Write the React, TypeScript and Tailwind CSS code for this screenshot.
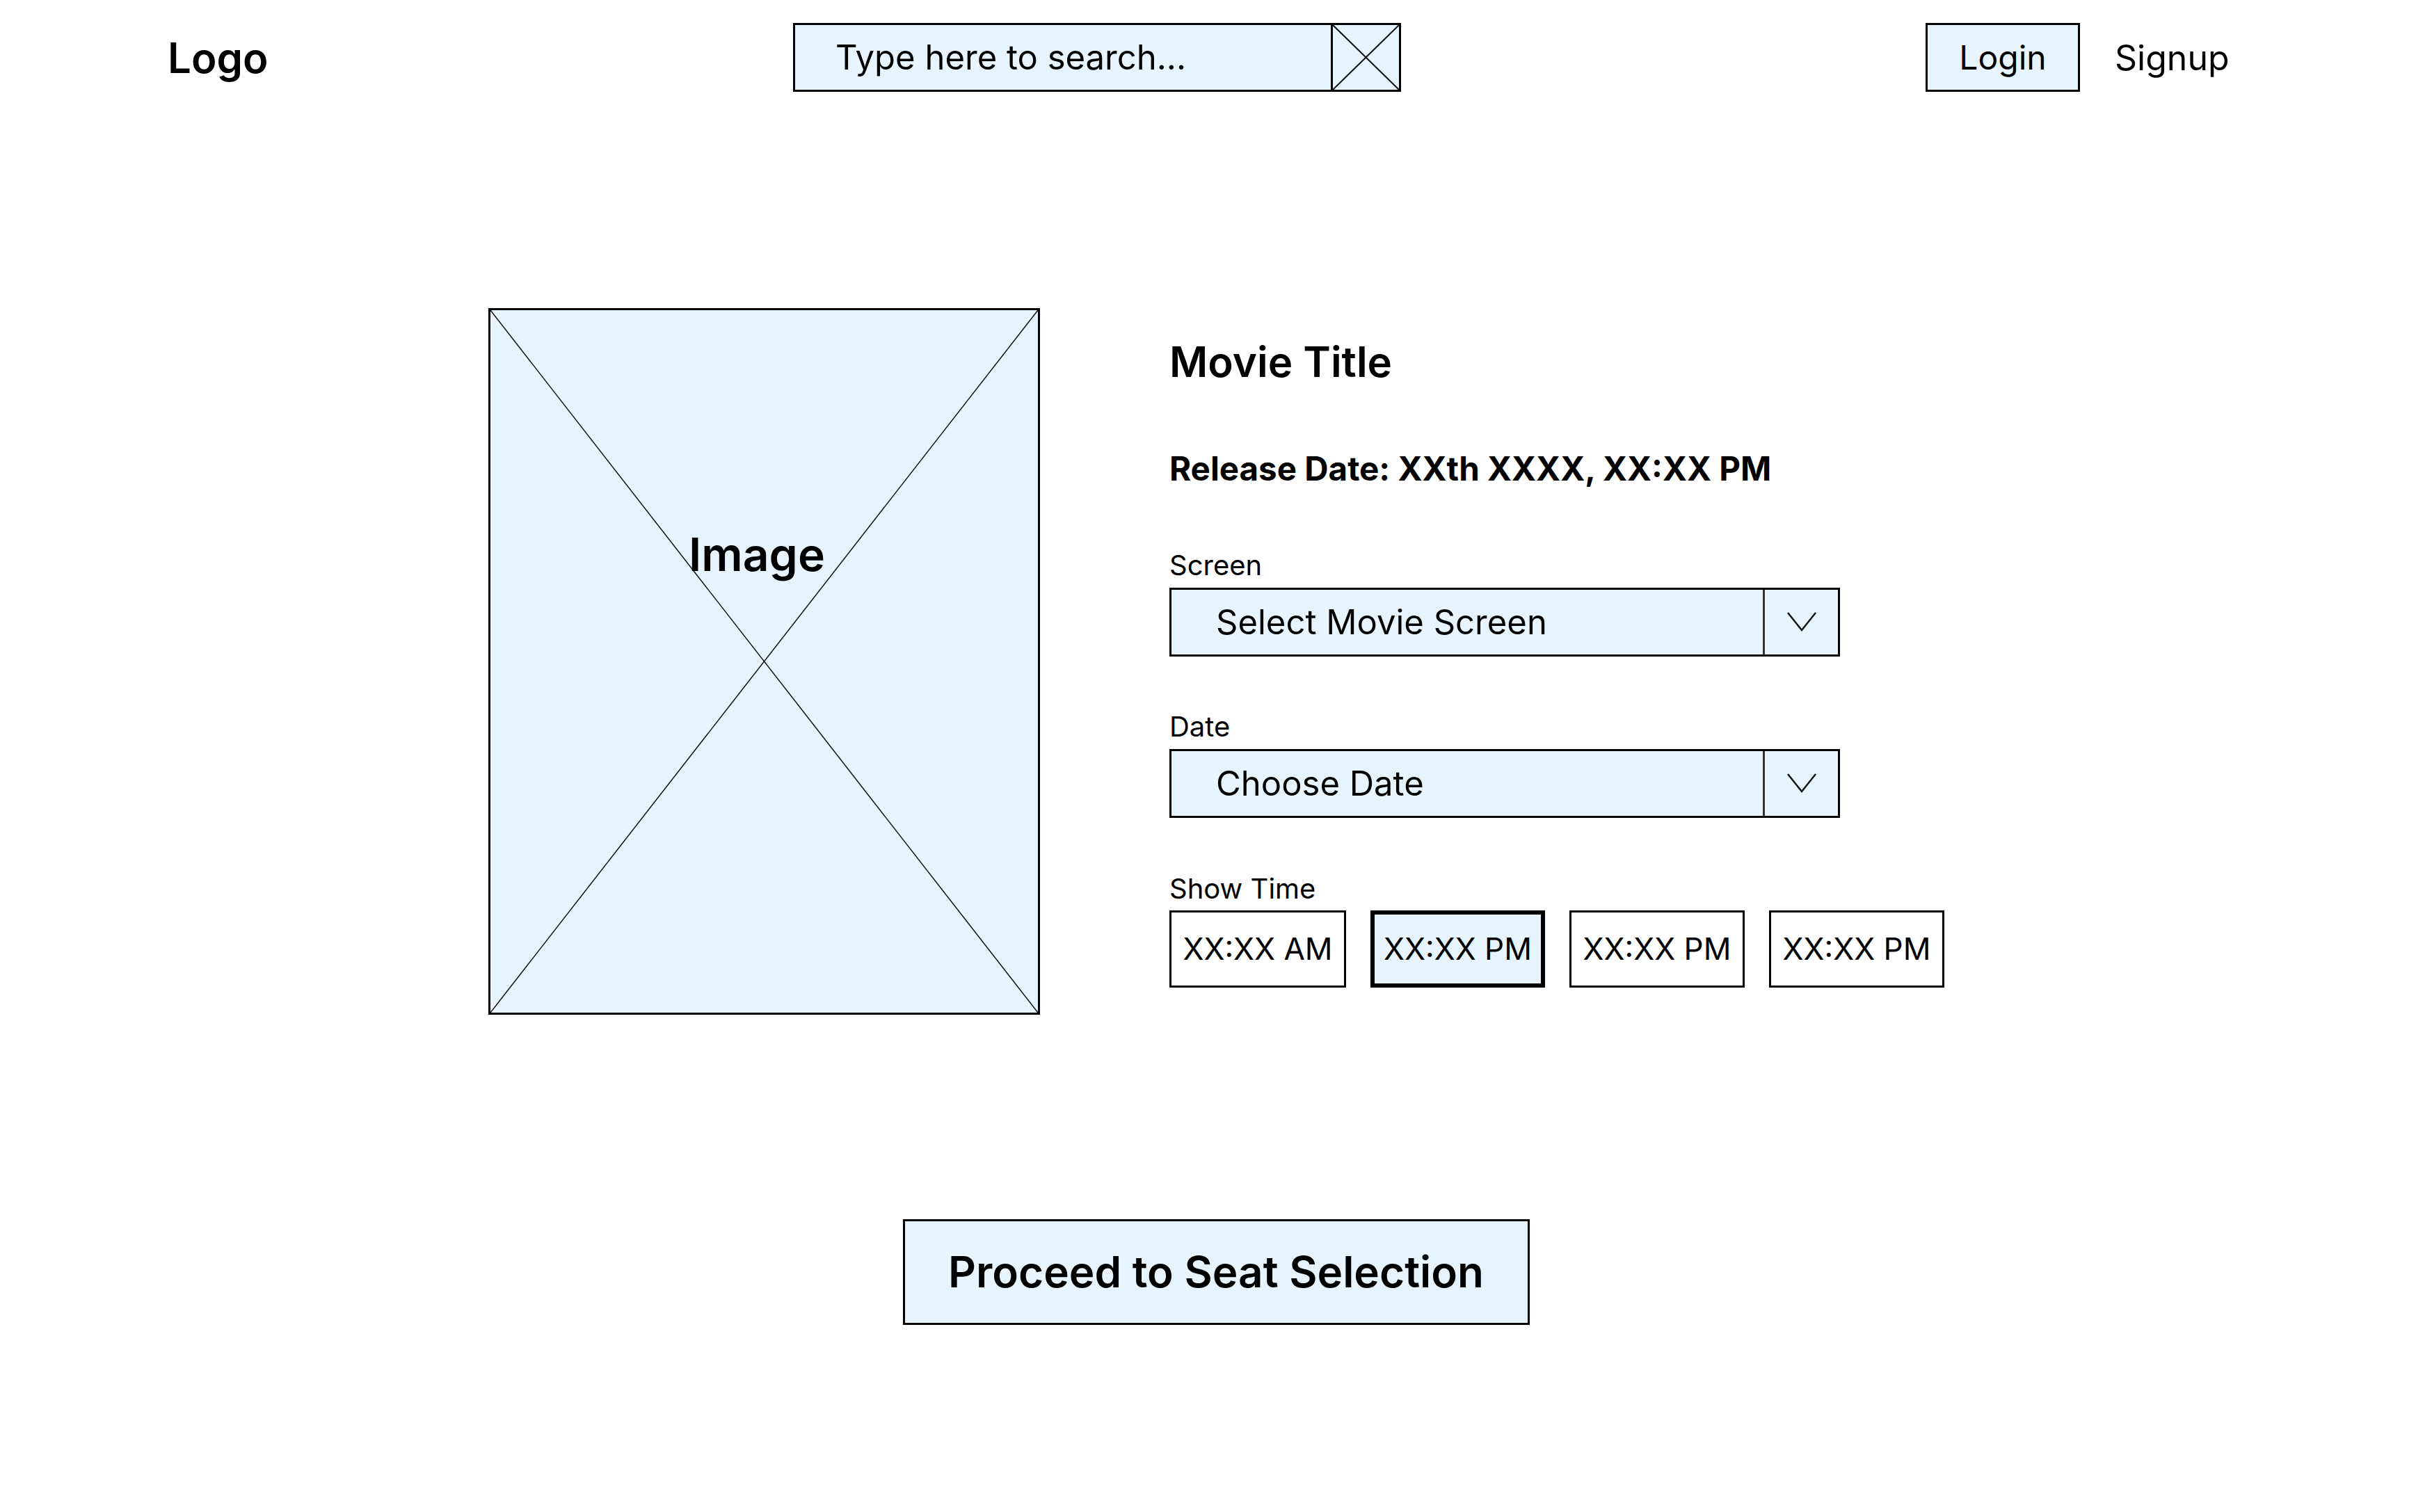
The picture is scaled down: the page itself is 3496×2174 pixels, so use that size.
const times = [
  { label: 'XX:XX AM', w: 'w-[254px]', active: false },
  { label: 'XX:XX PM', w: 'w-[251px]', active: true },
  { label: 'XX:XX PM', w: 'w-[252px]', active: false },
  { label: 'XX:XX PM', w: 'w-[252px]', active: false },
]

function CrossLines({ width = 1.5 }: { width?: number }) {
  return (
    <svg className="absolute inset-0 h-full w-full" viewBox="0 0 100 100" preserveAspectRatio="none">
      <line x1="0" y1="0" x2="100" y2="100" stroke="#111" strokeWidth={width} vectorEffect="non-scaling-stroke" />
      <line x1="100" y1="0" x2="0" y2="100" stroke="#111" strokeWidth={width} vectorEffect="non-scaling-stroke" />
    </svg>
  )
}

function Chevron() {
  return (
    <svg width="42" height="28" viewBox="0 0 42 28" fill="none">
      <path d="M1 1 L21 26 L41 1" stroke="#111" strokeWidth="2.5" />
    </svg>
  )
}

function Select({ placeholder }: { placeholder: string }) {
  return (
    <div className="mt-[12px] flex h-[99px] w-[964px] border-[3px] border-black bg-[#e8f4fd]">
      <div className="flex flex-1 items-center pl-[64px] text-[49px] leading-none">{placeholder}</div>
      <div className="flex w-[108px] items-center justify-center border-l-[3px] border-[#333]">
        <Chevron />
      </div>
    </div>
  )
}

export default function App() {
  return (
    <div className="min-h-screen w-full bg-white pb-[270px] font-['Inter',sans-serif] text-black">
      {/* Header */}
      <header className="flex items-center pl-[241px] pt-[33px]">
        <div className="w-[899px] text-[60px] font-semibold leading-none">Logo</div>
        <div className="flex h-[99px] w-[874px] border-[3px] border-black bg-[#e8f4fd]">
          <div className="flex flex-1 items-center pl-[58px] text-[49px] leading-none">Type here to search...</div>
          <div className="relative w-[98px] border-l-[3px] border-black">
            <CrossLines width={2} />
          </div>
        </div>
        <button className="ml-[754px] flex h-[99px] w-[222px] items-center justify-center border-[3px] border-black bg-[#e8f4fd] text-[48px] leading-none">
          Login
        </button>
        <span className="ml-[50px] text-[50px] leading-none">Signup</span>
      </header>

      {/* Movie details */}
      <main className="flex pl-[702px] pt-[311px]">
        <div className="relative h-[1016px] w-[793px] border-[3px] border-black bg-[#e8f4fd]">
          <CrossLines width={1.5} />
          <span className="absolute left-[285px] top-[318px] text-[66px] font-semibold leading-none">Image</span>
        </div>

        <div className="ml-[186px] flex flex-col">
          <h1 className="mt-[47px] text-[60px] font-semibold leading-none">Movie Title</h1>
          <p className="mt-[100px] text-[47.5px] font-bold leading-none">Release Date: XXth XXXX, XX:XX PM</p>

          <label className="mt-[95px] text-[40px] leading-none">Screen</label>
          <Select placeholder="Select Movie Screen" />

          <label className="mt-[81px] text-[40px] leading-none">Date</label>
          <Select placeholder="Choose Date" />

          <label className="mt-[82px] text-[40px] leading-none">Show Time</label>
          <div className="mt-[11px] flex gap-[35px]">
            {times.map((t, i) => (
              <button
                key={i}
                className={
                  t.active
                    ? `${t.w} flex h-[111px] items-center justify-center border-[6px] border-black bg-[#e8f4fd] text-[44px] leading-none`
                    : `${t.w} flex h-[111px] items-center justify-center border-[3px] border-black bg-white text-[44px] leading-none`
                }
              >
                {t.label}
              </button>
            ))}
          </div>
        </div>
      </main>

      <div className="mt-[294px] flex justify-center">
        <button className="flex h-[152px] w-[901px] items-center justify-center border-[3px] border-black bg-[#e8f4fd] text-[62px] font-semibold leading-none">
          Proceed to Seat Selection
        </button>
      </div>
    </div>
  )
}
